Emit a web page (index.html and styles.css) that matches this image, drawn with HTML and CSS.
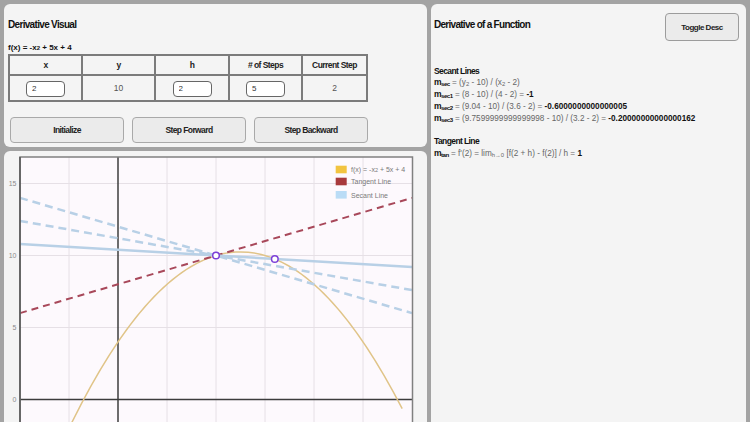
FILE: index.html
```html
<!DOCTYPE html>
<html>
<head>
<meta charset="utf-8">
<title>Derivative Visual</title>
<link rel="stylesheet" href="styles.css">
</head>
<body>
<div class="app">
  <div class="left">
    <section class="panel controls">
      <h1 class="title">Derivative Visual</h1>
      <div class="equation">f(x) = -x<span class="pow">2</span> + 5x + 4</div>
      <div class="table">
        <div class="th">x</div>
        <div class="th">y</div>
        <div class="th">h</div>
        <div class="th"># of Steps</div>
        <div class="th">Current Step</div>
        <div class="td"><input class="field" type="text" value="2"></div>
        <div class="td">10</div>
        <div class="td"><input class="field" type="text" value="2"></div>
        <div class="td"><input class="field" type="text" value="5"></div>
        <div class="td">2</div>
      </div>
      <div class="buttons">
        <button class="btn">Initialize</button>
        <button class="btn">Step Forward</button>
        <button class="btn">Step Backward</button>
      </div>
    </section>
    <section class="panel chart">
      <svg class="plot" width="423" height="290" viewBox="0 0 423 290">
        <rect x="16" y="6" width="392.5" height="300" fill="#fdf9fd"/>
        <g stroke="#e6e0e6" stroke-width="1">
          <line x1="65" y1="6" x2="65" y2="290"/>
          <line x1="163" y1="6" x2="163" y2="290"/>
          <line x1="212" y1="6" x2="212" y2="290"/>
          <line x1="261" y1="6" x2="261" y2="290"/>
          <line x1="310" y1="6" x2="310" y2="290"/>
          <line x1="359" y1="6" x2="359" y2="290"/>
          <line x1="16" y1="32.5" x2="408.5" y2="32.5"/>
          <line x1="16" y1="104.5" x2="408.5" y2="104.5"/>
          <line x1="16" y1="176.5" x2="408.5" y2="176.5"/>
        </g>
        <g stroke="#3c3c3c" stroke-width="1.5">
          <line x1="114" y1="6" x2="114" y2="290"/>
          <line x1="16" y1="248.5" x2="408.5" y2="248.5"/>
        </g>
        <g fill="#8a8a8a" font-family="Liberation Sans, Arial, sans-serif" font-size="7" text-anchor="end">
          <text x="12.5" y="35">15</text>
          <text x="12.5" y="107">10</text>
          <text x="12.5" y="179">5</text>
          <text x="12.5" y="251">0</text>
        </g>
        <path d="M65 277.3 Q231.6 -65.42 398.2 257.7" fill="none" stroke="#e0c488" stroke-width="1.5"/>
        <line x1="16" y1="162.1" x2="408" y2="46.9" stroke="#a8485a" stroke-width="2" stroke-dasharray="7 5"/>
        <g stroke="#b8d0e6" stroke-width="2.5" fill="none">
          <line x1="16" y1="46.9" x2="408" y2="162.1" stroke-dasharray="8 5"/>
          <line x1="16" y1="69.94" x2="408" y2="139.06" stroke-dasharray="8 5"/>
          <line x1="16" y1="92.98" x2="408" y2="116.02"/>
        </g>
        <g fill="#fff" stroke="#7c3fd8" stroke-width="1.5">
          <circle cx="212" cy="104.5" r="3.3"/>
          <circle cx="270.8" cy="107.96" r="3.3"/>
        </g>
        <rect x="16" y="6" width="392.5" height="300" fill="none" stroke="#808080" stroke-width="1.5"/>
        <line x1="16" y1="6" x2="16" y2="290" stroke="#555" stroke-width="1.5"/>
        <g>
          <rect x="331.7" y="14.7" width="11" height="7.6" fill="#f2c440"/>
          <rect x="331.7" y="26.7" width="11" height="7.6" fill="#a83a3c"/>
          <rect x="331.7" y="40" width="11" height="7.6" fill="#badcf6"/>
        </g>
        <g fill="#7a7a7a" font-family="Liberation Sans, Arial, sans-serif" font-size="7">
          <text x="347" y="21">f(x) = -x<tspan font-size="5.5">2</tspan> + 5x + 4</text>
          <text x="347" y="33">Tangent Line</text>
          <text x="347" y="46.5">Secant Line</text>
        </g>
      </svg>
    </section>
  </div>
  <section class="panel desc">
    <div class="desc-head">
      <h1 class="title">Derivative of a Function</h1>
      <button class="toggle">Toggle Desc</button>
    </div>
    <div class="notes">
      <div class="heading">Secant Lines</div>
      <div><span class="lbl">m<span class="s">sec</span></span> = (y<span class="s">2</span> - 10) / (x<span class="s">2</span> - 2)</div>
      <div><span class="lbl">m<span class="s">sec1</span></span> = (8 - 10) / (4 - 2) = <span class="val">-1</span></div>
      <div><span class="lbl">m<span class="s">sec2</span></span> = (9.04 - 10) / (3.6 - 2) = <span class="val">-0.6000000000000005</span></div>
      <div><span class="lbl">m<span class="s">sec3</span></span> = (9.7599999999999998 - 10) / (3.2 - 2) = <span class="val">-0.20000000000000162</span></div>
      <div class="heading gap">Tangent Line</div>
      <div><span class="lbl">m<span class="s">tan</span></span> = f'(2) = lim<span class="s">h→0</span> [f(2 + h) - f(2)] / h = <span class="val">1</span></div>
    </div>
  </section>
</div>
</body>
</html>
```

FILE: styles.css
```css
* {
  box-sizing: border-box;
}

html,
body {
  margin: 0;
  height: 100%;
}

body {
  background: #a3a3a3;
  overflow: hidden;
  font-family: "Liberation Sans", Arial, sans-serif;
}

.app {
  display: flex;
  gap: 4px;
  padding: 4px;
  height: 460px;
}

.left {
  width: 423px;
  display: flex;
  flex-direction: column;
  gap: 4px;
}

.panel {
  background: #f4f4f4;
  border-radius: 6px;
}

.controls {
  height: 143px;
  padding: 15.2px 4px 0 4px;
}

.title {
  margin: 0;
  font-weight: bold;
  font-size: 10px;
  line-height: 12px;
  letter-spacing: -0.68px;
  color: #111;
}

.equation {
  margin-top: 11.5px;
  font-weight: bold;
  font-size: 8px;
  line-height: 10px;
  color: #111;
}

.pow {
  font-size: 6px;
}

.table {
  width: 360px;
  margin-top: 1.3px;
  display: grid;
  grid-template-columns: 71px 71px 72px 71px 63px;
  grid-template-rows: 18px 24px;
  gap: 2px;
  padding: 2px;
  background: #7b7b7b;
}

.th,
.td {
  background: #f4f4f4;
  display: flex;
  align-items: center;
  justify-content: center;
}

.th {
  font-weight: bold;
  font-size: 8.5px;
  letter-spacing: -0.55px;
  color: #222;
}

.td {
  font-size: 8.5px;
  color: #555;
}

.field {
  width: 39px;
  height: 16px;
  margin: 2px 0 0 0;
  padding: 0 0 0 5px;
  border: 1px solid #666;
  border-radius: 4px;
  background: #fff;
  font-family: "Liberation Sans", Arial, sans-serif;
  font-size: 8px;
  color: #333;
}

.buttons {
  display: flex;
  gap: 8px;
  margin: 15px 0 0 2px;
}

.btn,
.toggle {
  padding: 0;
  background: #ebebeb;
  border: 1px solid #a9a9a9;
  border-radius: 4px;
  font-family: "Liberation Sans", Arial, sans-serif;
  font-weight: bold;
  font-size: 8.5px;
  letter-spacing: -0.6px;
  color: #222;
}

.btn {
  width: 114px;
  height: 26px;
}

.chart {
  flex: 1;
  overflow: hidden;
}

.plot {
  display: block;
}

.desc {
  width: 315px;
  padding: 9px 7px 0 3px;
}

.desc-head {
  display: flex;
  justify-content: space-between;
  align-items: flex-start;
}

.desc-head .title {
  margin-top: 6.2px;
  letter-spacing: -0.72px;
}

.toggle {
  width: 74px;
  height: 28px;
  font-size: 8px;
  letter-spacing: -0.5px;
  border-color: #9c9c9c;
}

.notes {
  margin-top: 24.5px;
  font-size: 8.2px;
  line-height: 11.8px;
  color: #666;
  white-space: nowrap;
}

.heading {
  font-weight: bold;
  font-size: 8.5px;
  letter-spacing: -0.6px;
  color: #111;
}

.heading.gap {
  margin-top: 11.8px;
}

.lbl {
  font-weight: bold;
  font-size: 8.5px;
  letter-spacing: -0.5px;
  color: #111;
}

.s {
  font-size: 0.72em;
  line-height: 0;
  vertical-align: -1px;
}

.val {
  font-weight: bold;
  color: #111;
}
```
